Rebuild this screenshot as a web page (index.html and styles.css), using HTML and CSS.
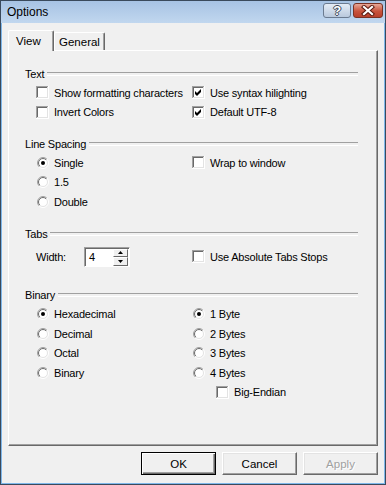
FILE: index.html
```html
<!DOCTYPE html>
<html lang="en">
<head>
    <meta charset="UTF-8">
    <title>Options</title>
    <link rel="stylesheet" href="styles.css">
</head>
<body>

<svg class="defs" width="0" height="0" aria-hidden="true">
    <defs>
        <linearGradient id="rg-out" x1="0" y1="0" x2="1" y2="1">
            <stop offset="0.5" stop-color="#a0a0a0"/>
            <stop offset="0.5" stop-color="#ffffff"/>
        </linearGradient>
        <linearGradient id="rg-in" x1="0" y1="0" x2="1" y2="1">
            <stop offset="0.5" stop-color="#696969"/>
            <stop offset="0.5" stop-color="#e3e3e3"/>
        </linearGradient>
        <symbol id="radio" viewBox="0 0 12 12">
            <circle cx="6" cy="6" r="5.5" fill="none" stroke="url(#rg-out)"/>
            <circle cx="6" cy="6" r="4.5" fill="#fff" stroke="url(#rg-in)"/>
        </symbol>
        <symbol id="box" viewBox="0 0 13 13">
            <rect width="13" height="13" fill="#fff"/>
            <path d="M0 0h12v1H1v11H0z" fill="#a0a0a0"/>
            <rect x="1" y="1" width="11" height="11" fill="#e3e3e3"/>
            <path d="M1 1h10v1H2v9H1z" fill="#696969"/>
            <rect x="2" y="2" width="9" height="9" fill="#fff"/>
        </symbol>
    </defs>
</svg>

<div class="window">
    <div class="titlebar">
        <span class="title">Options</span>
        <div class="caption">
            <span class="cap help">?</span>
            <span class="cap close">
                <svg width="14" height="11" viewBox="0 0 14 11">
                    <path d="M3 2l8 7M11 2l-8 7" stroke="#5a1a10" stroke-width="4.2" stroke-linecap="square"/>
                    <path d="M3 2l8 7M11 2l-8 7" stroke="#fff" stroke-width="2.2" stroke-linecap="square"/>
                </svg>
            </span>
        </div>
    </div>

    <div class="client">
        <div class="tabs">
            <div class="tab active">View</div>
            <div class="tab">General</div>
        </div>

        <div class="panel">
            <section class="group g-text">
                <div class="group-head"><span>Text</span></div>
                <div class="cols">
                    <div class="col">
                        <label class="row"><svg class="cb"><use href="#box"/></svg>Show formatting characters</label>
                        <label class="row"><svg class="cb"><use href="#box"/></svg>Invert Colors</label>
                    </div>
                    <div class="col">
                        <label class="row"><svg class="cb"><use href="#box"/><polygon points="3,5 5,7 9,3 9,6 5,10 3,8"/></svg>Use syntax hilighting</label>
                        <label class="row"><svg class="cb"><use href="#box"/><polygon points="3,5 5,7 9,3 9,6 5,10 3,8"/></svg>Default UTF-8</label>
                    </div>
                </div>
            </section>

            <section class="group g-spacing">
                <div class="group-head"><span>Line Spacing</span></div>
                <div class="cols">
                    <div class="col">
                        <label class="row"><svg class="rb"><use href="#radio"/><circle cx="6" cy="6" r="2"/></svg>Single</label>
                        <label class="row"><svg class="rb"><use href="#radio"/></svg>1.5</label>
                        <label class="row"><svg class="rb"><use href="#radio"/></svg>Double</label>
                    </div>
                    <div class="col">
                        <label class="row"><svg class="cb"><use href="#box"/></svg>Wrap to window</label>
                    </div>
                </div>
            </section>

            <section class="group g-tabs">
                <div class="group-head"><span>Tabs</span></div>
                <div class="cols">
                    <div class="col">
                        <div class="row width-row">
                            <span class="width-label">Width:</span>
                            <div class="spin">
                                <span class="spin-value">4</span>
                                <div class="spin-btns">
                                    <span class="spin-btn"><svg width="5" height="3"><path d="M2.5 0L5 3H0z"/></svg></span>
                                    <span class="spin-btn"><svg width="5" height="3"><path d="M0 0h5L2.5 3z"/></svg></span>
                                </div>
                            </div>
                        </div>
                    </div>
                    <div class="col">
                        <label class="row width-row"><svg class="cb"><use href="#box"/></svg>Use Absolute Tabs Stops</label>
                    </div>
                </div>
            </section>

            <section class="group g-binary">
                <div class="group-head"><span>Binary</span></div>
                <div class="cols">
                    <div class="col">
                        <label class="row"><svg class="rb"><use href="#radio"/><circle cx="6" cy="6" r="2"/></svg>Hexadecimal</label>
                        <label class="row"><svg class="rb"><use href="#radio"/></svg>Decimal</label>
                        <label class="row"><svg class="rb"><use href="#radio"/></svg>Octal</label>
                        <label class="row"><svg class="rb"><use href="#radio"/></svg>Binary</label>
                    </div>
                    <div class="col">
                        <label class="row"><svg class="rb"><use href="#radio"/><circle cx="6" cy="6" r="2"/></svg>1 Byte</label>
                        <label class="row"><svg class="rb"><use href="#radio"/></svg>2 Bytes</label>
                        <label class="row"><svg class="rb"><use href="#radio"/></svg>3 Bytes</label>
                        <label class="row"><svg class="rb"><use href="#radio"/></svg>4 Bytes</label>
                        <label class="row sub"><svg class="cb"><use href="#box"/></svg>Big-Endian</label>
                    </div>
                </div>
            </section>
        </div>

        <div class="actions">
            <button class="btn default">OK</button>
            <button class="btn">Cancel</button>
            <button class="btn" disabled>Apply</button>
        </div>
    </div>
</div>

</body>
</html>
```

FILE: styles.css
```css
* {
    box-sizing: border-box;
}
body {
    margin: 0;
    font-family: "Liberation Sans", Arial, sans-serif;
    font-size: 11px;
    letter-spacing: -0.2px;
    color: #000;
    background: #fff;
}
.defs {
    position: absolute;
}

.window {
    width: 386px;
    height: 485px;
    border: 1px solid #3a4a5c;
    background: #7fb7ea;
    display: flex;
    flex-direction: column;
}
.titlebar {
    height: 22px;
    display: flex;
    align-items: center;
    justify-content: space-between;
    padding: 0 2px 0 6px;
    background: linear-gradient(#a7c3e4, #c1d7ef);
}
.title {
    font-size: 12px;
    letter-spacing: 0;
}
.caption {
    display: flex;
    gap: 2px;
    margin-top: -4px;
}
.cap {
    height: 15px;
    border: 1px solid #6b7b90;
    border-radius: 3px;
    display: flex;
    align-items: center;
    justify-content: center;
}
.help {
    width: 28px;
    background: linear-gradient(#e4ecf6, #b9c9dd);
    font-weight: bold;
    font-size: 13px;
    color: #fff;
    text-shadow: 1px 0 #3c4656, -1px 0 #3c4656, 0 1px #3c4656, 0 -1px #3c4656;
}
.close {
    width: 30px;
    border-color: #7a3224;
    background: linear-gradient(#e8a898, #c8533c 55%, #b8402c);
}

.client {
    flex: 1;
    margin: 0 1px 1px 1px;
    padding: 7px 6px 7px 6px;
    background: #f0f0f0;
    display: flex;
    flex-direction: column;
}

.tabs {
    height: 20px;
    display: flex;
    align-items: flex-start;
}
.tab {
    position: relative;
    margin-top: 2px;
    height: 18px;
    padding: 3px 4px 0 4px;
    border: 1px solid #fff;
    border-bottom: none;
    border-right-color: #696969;
    box-shadow: inset -1px 0 #a0a0a0;
    border-radius: 2px 2px 0 0;
    background: #f0f0f0;
    font-size: 11.5px;
    letter-spacing: 0;
}
.tab.active {
    margin-top: 0;
    height: 21px;
    width: 46px;
    padding: 4px 0 0 7px;
    z-index: 1;
}

.panel {
    height: 396px;
    padding: 16px 19px 0 16px;
    border: 1px solid;
    border-color: #fff #696969 #696969 #fff;
    box-shadow: inset -1px -1px #a0a0a0;
}

.group-head {
    height: 14px;
    display: flex;
    align-items: center;
    gap: 3px;
}
.group-head::after {
    content: "";
    flex: 1;
    height: 2px;
    border-top: 1px solid #a0a0a0;
    border-bottom: 1px solid #fff;
}
.cols {
    display: grid;
    grid-template-columns: 156px 1fr;
    margin-top: 2px;
    padding-left: 11px;
}
.row {
    height: 19.5px;
    display: flex;
    align-items: center;
    gap: 5px;
    white-space: nowrap;
}
.cb {
    width: 13px;
    height: 13px;
    flex: none;
}
.rb {
    width: 12px;
    height: 12px;
    margin-left: 1px;
    flex: none;
}
.sub {
    padding-left: 24px;
}

.g-spacing {
    margin-top: 15px;
}
.g-tabs {
    margin-top: 15.5px;
}
.g-tabs .cols {
    margin-top: 5.5px;
}
.g-binary {
    margin-top: 21px;
}
.g-binary .cols {
    margin-top: 3px;
}

.width-row {
    height: 20px;
}
.width-label {
    width: 43px;
}
.spin {
    width: 46px;
    height: 20px;
    display: flex;
    border: 1px solid;
    border-color: #a0a0a0 #fff #fff #a0a0a0;
    box-shadow: inset 1px 1px #696969;
    background: #fff;
}
.spin-value {
    flex: 1;
    padding: 3px 0 0 4px;
}
.spin-btns {
    width: 16px;
    display: flex;
    flex-direction: column;
    padding: 1px 1px 0 0;
}
.spin-btn {
    flex: 1;
    display: flex;
    align-items: center;
    justify-content: center;
    background: #f0f0f0;
    border: 1px solid;
    border-color: #fff #696969 #696969 #fff;
}

.actions {
    margin-top: 6px;
    display: flex;
    justify-content: flex-end;
    gap: 6px;
}
.btn {
    width: 75px;
    height: 23px;
    padding: 0;
    font: inherit;
    font-size: 11.5px;
    letter-spacing: 0;
    color: #000;
    background: #f0f0f0;
    border: 1px solid;
    border-color: #fff #696969 #696969 #fff;
    box-shadow: inset -1px -1px #a0a0a0, inset 1px 1px #e3e3e3;
}
.btn.default {
    border: 1px solid #000;
    box-shadow: inset 1px 1px #fff, inset -1px -1px #696969, inset -2px -2px #a0a0a0;
}
.btn:disabled {
    color: #a0a0a0;
    text-shadow: 1px 1px #fff;
}
```
